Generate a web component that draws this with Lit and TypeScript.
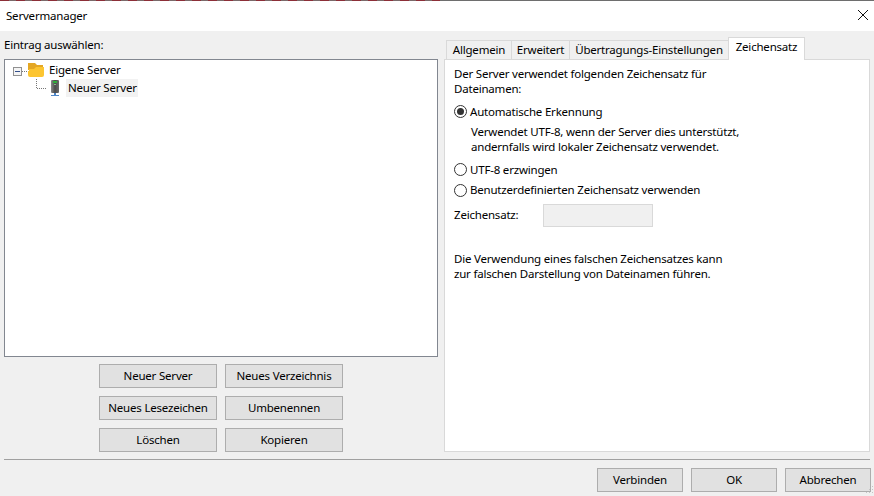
import { LitElement, html, svg, css } from "lit";
import { customElement } from "lit/decorators.js";

@customElement("app-root")
export class AppRoot extends LitElement {
  static styles = css`
    :host { display: block; position: relative; width: 874px; height: 496px; overflow: hidden; background: #f0f0f0; color: #000;
      font-family: "Noto Sans", "Open Sans", sans-serif; font-size: 11.5px; line-height: 15px; letter-spacing: -0.2px; }
    * { box-sizing: border-box; }
    .topline { height: 1px; background: linear-gradient(#6e6e6e, #6e6e6e) right top / 434px 100% no-repeat, repeating-linear-gradient(90deg, #8c2f38 0 9px, #7a6a6a 9px 16px); }
    .title { height: 30px; background: #fff; display: flex; align-items: center; justify-content: space-between; padding: 0 5px 0 6px; }
    .title span { padding-bottom: 2px; }
    .close { width: 12px; height: 12px; display: block; margin-bottom: 2px; }
    .main { height: 428px; padding: 0 4px; display: grid; grid-template-columns: 434px 426px; column-gap: 6px; }
    .left { display: flex; flex-direction: column; }
    .lbl { height: 28px; padding-top: 6px; }
    .tree { height: 298px; background: #fff; border: 1px solid #828790; padding: 1px 0 0 8px; }
    .tree-row { display: flex; align-items: center; height: 18px; }
    .exp { width: 9px; height: 9px; display: block; flex: none; margin-top: 3px; }
    .link { width: 6px; height: 9px; display: block; flex: none; margin-top: 3px; }
    .folder { width: 16px; height: 16px; flex: none; display: block; }
    .row-text { margin-left: 5px; padding-bottom: 2px; }
    .sub { padding-left: 23px; }
    .dots { width: 11px; height: 18px; flex: none; display: block; }
    .srv { width: 16px; height: 18px; flex: none; display: block; }
    .sel { background: #f2f2f2; padding: 0 1px 2px 2px; margin-left: 3px; height: 18px; min-width: 71px; display: flex; align-items: center; }
    .btns { display: grid; grid-template-columns: 118px 118px; grid-auto-rows: 24px; gap: 8px; justify-content: center; padding-top: 7px; }
    button { font: inherit; letter-spacing: inherit; color: #000; background: #e1e1e1; border: 1px solid #adadad; padding: 0 0 2px; margin: 0; display: flex; align-items: center; justify-content: center; }
    .right { display: flex; flex-direction: column; padding-top: 8px; }
    .tabs { display: flex; height: 20px; padding-left: 2px; align-items: flex-end; position: relative; z-index: 1; }
    .tab { height: 19px; background: #f0f0f0; border: 1px solid #d9d9d9; border-bottom: none; border-right: none; display: flex; align-items: center; justify-content: center; padding-bottom: 2px; }
    .tab.w1 { width: 65px; }
    .tab.w2 { width: 58px; }
    .tab.w3 { width: 159px; }
    .tab.on { width: 77px; height: 23px; background: #fff; border-right: 1px solid #d9d9d9; padding-bottom: 5px; margin-bottom: -1px; }
    .panel { height: 393px; background: #fff; border: 1px solid #d9d9d9; padding: 6px 9px; }
    .panel p { margin: 0; }
    .radio { display: flex; align-items: center; gap: 3px; height: 16px; }
    .rd { width: 13px; height: 13px; display: block; flex: none; }
    .r1 { margin-top: 7px; }
    .panel .desc { margin: 5px 0 0 17px; }
    .r2 { margin-top: 7px; }
    .r3 { margin-top: 5px; }
    .r3 span { padding-bottom: 2px; }
    .r1 span, .r2 span { padding-bottom: 0; }
    .cs { display: flex; align-items: center; margin-top: 6px; height: 23px; }
    .cs span { width: 89px; padding-bottom: 2px; }
    .inp { width: 110px; height: 23px; background: #f0f0f0; border: 1px solid #d9d9d9; }
    .panel .warn { margin-top: 24px; }
    .sep { height: 1px; margin: 0 4px; background: #a0a0a0; }
    .bottom { display: flex; justify-content: flex-end; gap: 8px; padding: 8px 3px 0 0; }
    .bottom button { width: 86px; height: 24px; }
    .grip { position: absolute; right: 0; bottom: 0; width: 12px; height: 12px; display: block; }
  `;

  radio(on: boolean) {
    return html`<svg class="rd" viewBox="0 0 13 13">
      <circle cx="6.5" cy="6.5" r="6" fill="#fff" stroke="#333" stroke-width="1"></circle>
      ${on ? svg`<circle cx="6.5" cy="6.5" r="3.5" fill="#333"></circle>` : ""}
    </svg>`;
  }

  render() {
    return html`
      <div class="topline"></div>
      <div class="title">
        <span>Servermanager</span>
        <svg class="close" viewBox="0 0 12 12"><path d="M1 1 L11 11 M11 1 L1 11" stroke="#111" stroke-width="1" fill="none"></path></svg>
      </div>
      <div class="main">
        <div class="left">
          <div class="lbl">Eintrag auswählen:</div>
          <div class="tree">
            <div class="tree-row">
              <svg class="exp" viewBox="0 0 9 9"><rect x=".5" y=".5" width="8" height="8" fill="#f4f4f4" stroke="#919191"></rect><path d="M2 4.5H7" stroke="#33508c"></path></svg>
              <svg class="link" viewBox="0 0 6 9"><path d="M0 4.5H6" stroke="#777" stroke-dasharray="1 1" fill="none"></path></svg>
              <svg class="folder" viewBox="0 0 16 16">
                <path d="M0 1 L7 1 L9 3 L15 3 L15 8 L0 8 Z" fill="#e4a724"></path>
                <path d="M1 9 L1 7 L6 7 L8 5 L16 5 L16 13 Q16 15 14 15 L2 15 Q0 15 0 13 L0 9 Z" fill="#fcc531"></path>
              </svg>
              <span class="row-text">Eigene Server</span>
            </div>
            <div class="tree-row sub">
              <svg class="dots" viewBox="0 0 11 18"><path d="M.5 0V9.5H11" stroke="#777" stroke-dasharray="1 1" fill="none"></path></svg>
              <svg class="srv" viewBox="0 0 16 18">
                <defs>
                  <linearGradient id="body" x1="0" x2="1" y1="0" y2="0">
                    <stop offset="0" stop-color="#8a8a8a"></stop>
                    <stop offset=".5" stop-color="#4a4a4a"></stop>
                    <stop offset="1" stop-color="#6a6a6a"></stop>
                  </linearGradient>
                </defs>
                <rect x="4" y="1" width="8" height="13" rx="1" fill="url(#body)"></rect>
                <rect x="6" y="2" width="4" height="2" fill="#2fae3a"></rect>
                <rect x="7" y="5" width="2" height="1" fill="#7fbf85"></rect>
                <rect x="7" y="14" width="2" height="2" fill="#4f86c6"></rect>
                <rect x="4" y="16" width="8" height="1" fill="#4f86c6"></rect>
              </svg>
              <span class="sel">Neuer Server</span>
            </div>
          </div>
          <div class="btns">
            <button>Neuer Server</button><button>Neues Verzeichnis</button>
            <button>Neues Lesezeichen</button><button>Umbenennen</button>
            <button>Löschen</button><button>Kopieren</button>
          </div>
        </div>
        <div class="right">
          <div class="tabs">
            <div class="tab w1">Allgemein</div>
            <div class="tab w2">Erweitert</div>
            <div class="tab w3">Übertragungs-Einstellungen</div>
            <div class="tab on">Zeichensatz</div>
          </div>
          <div class="panel">
            <p>Der Server verwendet folgenden Zeichensatz für<br />Dateinamen:</p>
            <div class="radio r1">${this.radio(true)}<span>Automatische Erkennung</span></div>
            <p class="desc">Verwendet UTF-8, wenn der Server dies unterstützt,<br />andernfalls wird lokaler Zeichensatz verwendet.</p>
            <div class="radio r2">${this.radio(false)}<span>UTF-8 erzwingen</span></div>
            <div class="radio r3">${this.radio(false)}<span>Benutzerdefinierten Zeichensatz verwenden</span></div>
            <div class="cs"><span>Zeichensatz:</span><div class="inp"></div></div>
            <p class="warn">Die Verwendung eines falschen Zeichensatzes kann<br />zur falschen Darstellung von Dateinamen führen.</p>
          </div>
        </div>
      </div>
      <div class="sep"></div>
      <div class="bottom">
        <button>Verbinden</button><button>OK</button><button>Abbrechen</button>
      </div>
      <svg class="grip" viewBox="0 0 12 12" fill="#c4c4c4">
        <rect x="10" y="2" width="1" height="1"></rect>
        <rect x="7" y="5" width="1" height="1"></rect><rect x="10" y="5" width="1" height="1"></rect>
        <rect x="4" y="8" width="1" height="1"></rect><rect x="7" y="8" width="1" height="1"></rect><rect x="10" y="8" width="1" height="1"></rect>
      </svg>
    `;
  }
}
